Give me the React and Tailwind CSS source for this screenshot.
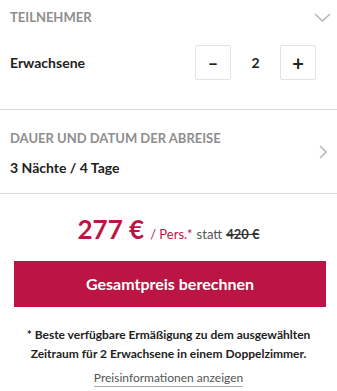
import React from "react";

export default function App() {
  return (
    <div className="w-[337px] h-[391px] bg-white overflow-hidden font-['Lato','Liberation_Sans',sans-serif] text-[#222]">
      {/* Section 1 */}
      <div className="pl-[10px] pr-[6px] pt-[8px] pb-[29px] border-b border-[#d9d9d9]">
        <div className="flex items-center justify-between h-[20px]">
          <span className="text-[13px] font-bold uppercase text-[#8e8e8e]">Teilnehmer</span>
          <svg width="17" height="9" viewBox="0 0 17 9" className="-mt-[1px]">
            <path d="M1 1l7.5 7 7.5-7" fill="none" stroke="#b8b8b8" strokeWidth="1.6" />
          </svg>
        </div>
        <div className="flex items-center justify-between mt-[17px] pr-[15px] h-[35px]">
          <span className="text-[14px] font-bold">Erwachsene</span>
          <div className="flex items-center">
            <button className="w-[36px] h-[35px] border border-[#e3e3e3] rounded-[2px] flex items-center justify-center text-[18px] font-bold leading-none">–</button>
            <span className="w-[49px] text-center text-[14px] font-bold">2</span>
            <button className="w-[36px] h-[35px] border border-[#e3e3e3] rounded-[2px] flex items-center justify-center text-[20px] font-bold leading-none">+</button>
          </div>
        </div>
      </div>
      {/* Section 2 */}
      <div className="pl-[10px] pr-[10px] pt-[18px] pb-[15px] border-b border-[#d9d9d9] flex items-center justify-between">
        <div className="flex flex-col">
          <span className="text-[13px] leading-[20px] font-bold uppercase text-[#8e8e8e]">Dauer und Datum der Abreise</span>
          <span className="mt-[10px] text-[14px] leading-[20px] font-bold">3 Nächte / 4 Tage</span>
        </div>
        <svg width="8" height="14" viewBox="0 0 8 14" className="-mt-[2px]">
          <path d="M1 1l6 6-6 6" fill="none" stroke="#b8b8b8" strokeWidth="1.6" />
        </svg>
      </div>
      {/* Price */}
      <div className="flex items-baseline justify-center mt-[20px] h-[30px]">
        <span className="text-[26px] leading-[30px] font-bold text-[#bd1543]">277 €</span>
        <span className="ml-[6px] text-[13px] text-[#bd1543]">/ Pers.*</span>
        <span className="ml-[4px] text-[13px] text-[#555]">statt</span>
        <span className="ml-[4px] text-[13px] font-bold text-[#333] line-through">420 €</span>
      </div>
      {/* Button */}
      <div className="px-[14px] mt-[17px]">
        <button className="w-[312px] h-[46px] bg-[#bd1543] text-white text-[16px] font-bold flex items-center justify-center">
          Gesamtpreis berechnen
        </button>
      </div>
      {/* Footnote */}
      <p className="mt-[18px] text-center text-[12px] leading-[19px] font-bold text-[#222] px-[10px]">
        * Beste verfügbare Ermäßigung zu dem ausgewählten<br />Zeitraum für 2 Erwachsene in einem Doppelzimmer.
      </p>
      <div className="flex justify-center mt-[6px]">
        <span className="text-[12px] leading-[17px] text-[#555] border-b border-[#aaa]">Preisinformationen anzeigen</span>
      </div>
    </div>
  );
}
